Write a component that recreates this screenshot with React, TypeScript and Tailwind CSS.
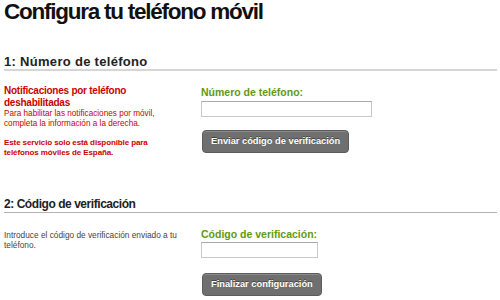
const GREEN = 'text-[#5f9a12]';

const Field: React.FC<{ label: string; inputWidth: string; button: string; gapTop: string; btnTop: string }> = ({
  label,
  inputWidth,
  button,
  gapTop,
  btnTop,
}) => (
  <div className="flex flex-col items-start">
    <label className={`block text-[10.5px] leading-[12px] font-bold ${GREEN}`}>{label}</label>
    <input
      type="text"
      className={`${gapTop} ${inputWidth} h-[16px] border border-[#c8c8c8] border-t-[#a9a9a9] bg-white outline-none`}
    />
    <button
      type="button"
      className={`${btnTop} ml-[1px] h-[23px] rounded-[4px] border border-[#5c5c5c] bg-[#6f6f6f] px-[8px] text-[9.3px] leading-[21px] font-bold text-white [text-shadow:0_-1px_0_#444] shadow-[inset_0_1px_0_#8a8a8a]`}
    >
      {button}
    </button>
  </div>
);

export default function App() {
  return (
    <div className="h-[300px] w-[500px] overflow-hidden bg-white pl-[4px] pr-[3px] font-['Liberation_Sans',Arial,sans-serif]">
      <h1 className="text-[22.5px] leading-[24px] font-bold tracking-[-1.25px] text-[#111]">
        Configura tu teléfono móvil
      </h1>

      <h2 className="mt-[30px] border-b-2 border-[#d6d6d6] text-[13px] leading-[15px] font-bold tracking-[0.3px] text-[#222]">
        1: Número de teléfono
      </h2>

      <div className="flex">
        <div className="w-[197px] shrink-0 pt-[14px] text-[#cc0000]">
          <p className="text-[10px] leading-[11.5px] font-bold tracking-[-0.25px]">
            Notificaciones por teléfono
            <br />
            deshabilitadas
          </p>
          <p className="mt-[1px] text-[8.2px] leading-[10px]">
            Para habilitar las notificaciones por móvil,
            <br />
            completa la información a la derecha.
          </p>
          <p className="mt-[9px] text-[8px] leading-[10px] font-bold tracking-[-0.1px]">
            Este servicio solo está disponible para
            <br />
            teléfonos móviles de España.
          </p>
        </div>
        <div className="pt-[15px]">
          <Field
            label="Número de teléfono:"
            inputWidth="w-[171px]"
            button="Enviar código de verificación"
            gapTop="mt-[3px]"
            btnTop="mt-[13px]"
          />
        </div>
      </div>

      <h2 className="mt-[39px] border-b border-[#b3b3b3] pb-[1px] text-[12px] leading-[14px] font-bold tracking-[-0.45px] text-[#222]">
        2: Código de verificación
      </h2>

      <div className="flex">
        <div className="w-[197px] shrink-0 pt-[17px] text-[8.3px] leading-[10px] text-[#444]">
          Introduce el código de verificación enviado a tu
          <br />
          teléfono.
        </div>
        <div className="pt-[15px]">
          <Field
            label="Código de verificación:"
            inputWidth="w-[117px]"
            button="Finalizar configuración"
            gapTop="mt-[2px]"
            btnTop="mt-[15px]"
          />
        </div>
      </div>
    </div>
  );
}
